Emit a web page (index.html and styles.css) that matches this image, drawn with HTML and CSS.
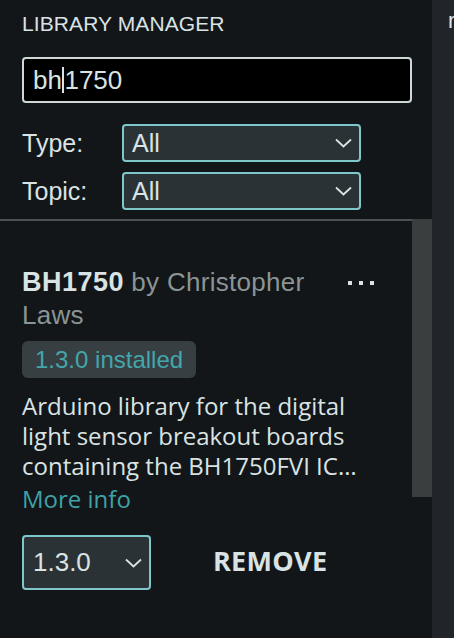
FILE: index.html
```html
<!DOCTYPE html>
<html>
<head>
  <title>Library Manager</title>
  <link rel="stylesheet" href="styles.css">
</head>
<body>
  <div class="app">
    <aside class="panel">
      <div class="head">
        <h1 class="title">Library Manager</h1>

        <div class="search">bh<span class="caret"></span>1750</div>

        <div class="filter">
          <label>Type:</label>
          <div class="select">
            <span>All</span>
            <svg class="chev" width="17" height="10" viewBox="0 0 17 10"><polyline points="1,1.5 8.5,8.5 16,1.5"/></svg>
          </div>
        </div>

        <div class="filter">
          <label>Topic:</label>
          <div class="select">
            <span>All</span>
            <svg class="chev" width="17" height="10" viewBox="0 0 17 10"><polyline points="1,1.5 8.5,8.5 16,1.5"/></svg>
          </div>
        </div>
      </div>

      <div class="list">
        <div class="card">
          <div class="card-head">
            <div class="lib-title"><b>BH1750</b> <span class="author">by Christopher Laws</span></div>
            <div class="menu"><i></i><i></i><i></i></div>
          </div>

          <span class="badge">1.3.0 installed</span>

          <p class="desc">Arduino library for the digital light sensor breakout boards containing the BH1750FVI IC…</p>
          <a class="more" href="#">More info</a>

          <div class="actions">
            <div class="select version">
              <span>1.3.0</span>
              <svg class="chev" width="17" height="10" viewBox="0 0 17 10"><polyline points="1,1.5 8.5,8.5 16,1.5"/></svg>
            </div>
            <button class="remove">Remove</button>
          </div>
        </div>
        <div class="scrollbar"></div>
      </div>
    </aside>

    <div class="side">r</div>
  </div>
</body>
</html>
```

FILE: styles.css
```css
body {
  margin: 0;
  background: #121619;
  color: #dae3e3;
  font-family: "Liberation Sans", Arial, sans-serif;
}
.app {
  display: flex;
  height: 638px;
  overflow: hidden;
}
.panel {
  width: 432px;
  flex: none;
  display: flex;
  flex-direction: column;
}
.head {
  padding: 12px 20px 9px 22px;
  border-bottom: 2px solid #4b5153;
}
.title {
  margin: 0 0 21px;
  font-size: 21px;
  line-height: 24px;
  font-weight: normal;
  text-transform: uppercase;
  letter-spacing: 0.1px;
}
.search {
  height: 42px;
  border: 2px solid #d0d7d7;
  border-radius: 4px;
  background: #000;
  padding-left: 9px;
  display: flex;
  align-items: center;
  font-size: 26px;
  margin-bottom: 21px;
}
.caret {
  display: inline-block;
  width: 1.5px;
  height: 26px;
  background: #dae3e3;
  margin: 0 0.5px;
}
.filter {
  display: flex;
  align-items: center;
  margin-bottom: 10px;
}
.filter:last-child {
  margin-bottom: 0;
}
.filter label {
  width: 100px;
  font-size: 25px;
}
.select {
  box-sizing: border-box;
  width: 239px;
  height: 38px;
  border: 2px solid #7ec8cb;
  border-radius: 4px;
  background: #2b3236;
  padding: 0 7px 0 8px;
  display: flex;
  align-items: center;
  justify-content: space-between;
  font-size: 25px;
}
.chev polyline {
  fill: none;
  stroke: #dae3e3;
  stroke-width: 1.8;
}
.list {
  flex: 1;
  position: relative;
}
.scrollbar {
  position: absolute;
  right: 0;
  top: -2px;
  width: 20px;
  height: 278px;
  background: #3a3e3f;
}
.card {
  padding: 45px 40px 0 22px;
}
.card-head {
  display: flex;
  align-items: flex-start;
  gap: 16px;
}
.lib-title {
  flex: 1;
  font-size: 26px;
  line-height: 33px;
}
.lib-title b {
  font-size: 27px;
  letter-spacing: 0.5px;
}
.author {
  color: #8b9495;
  letter-spacing: 0.3px;
}
.menu {
  display: flex;
  gap: 7px;
  padding: 15px 18px 0 0;
}
.menu i {
  width: 4px;
  height: 4px;
  background: #dae3e3;
}
.badge {
  display: inline-block;
  margin-top: 9px;
  padding: 0 13px;
  height: 37px;
  line-height: 37px;
  border-radius: 6px;
  background: #373f43;
  color: #44a6ab;
  font-size: 24px;
}
.desc {
  margin: 13px 0 0;
  font-family: "Open Sans", sans-serif;
  font-size: 24px;
  line-height: 30px;
  max-width: 370px;
}
.more {
  display: block;
  margin-top: 2px;
  font-family: "Open Sans", sans-serif;
  font-size: 24px;
  line-height: 32px;
  color: #3fa1a6;
  text-decoration: none;
}
.actions {
  display: flex;
  align-items: center;
  gap: 62px;
  margin-top: 20px;
}
.version {
  width: 129px;
  height: 55px;
  padding-left: 9px;
  font-size: 26px;
}
.remove {
  background: none;
  border: none;
  padding: 0 0 4px;
  color: #dae3e3;
  font-family: "Open Sans", sans-serif;
  font-weight: bold;
  font-size: 27px;
  letter-spacing: 0.3px;
  text-transform: uppercase;
}
.side {
  flex: 1;
  background: #212529;
  padding: 8px 0 0 16px;
  font-size: 22px;
}
```
